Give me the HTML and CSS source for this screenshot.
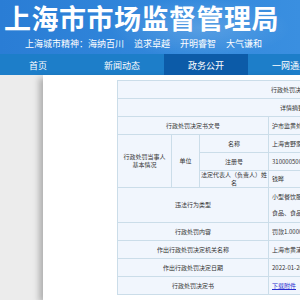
FILE: index.html
```html
<!DOCTYPE html>
<html lang="zh-CN">
<head>
<meta charset="UTF-8" />
<meta name="viewport" content="width=device-width, initial-scale=1" />
<title>上海市市场监督管理局 - 行政处罚信息</title>
<link rel="stylesheet" href="styles.css">
</head>
<body>
<div class="top">
  <div class="banner">
    <h1>上海市市场监督管理局</h1>
    <p class="motto">
      <span>上海城市精神：海纳百川</span>
      <span>追求卓越</span>
      <span>开明睿智</span>
      <span>大气谦和</span>
    </p>
  </div>
  <ul class="nav">
    <li>首页</li>
    <li>新闻动态</li>
    <li class="on">政务公开</li>
    <li>一网通办</li>
  </ul>
</div>

<div class="page">
  <div class="main">
    <!-- 行政处罚信息表 -->
    <table class="info">
      <colgroup>
        <col class="c1"><col class="c2"><col class="c3"><col class="c4">
      </colgroup>
      <tr><td colspan="4" class="mid">行政处罚决定书信息</td></tr>
      <tr><td colspan="4" class="mid">详情摘要信息</td></tr>
      <tr><td colspan="3" class="mid">行政处罚决定书文号</td><td>沪市监黄处〔2022〕012021000318号</td></tr>
      <tr>
        <td rowspan="3" class="mid">行政处罚当事人<br>基本情况</td>
        <td rowspan="3" class="mid">单位</td>
        <td class="mid">名称</td>
        <td>上海吉野家快餐有限公司第一分店</td>
      </tr>
      <tr><td class="mid">注册号</td><td>310000500123456</td></tr>
      <tr class="short"><td class="mid">法定代表人（负责人）姓名</td><td>钱晔</td></tr>
      <tr class="tall"><td colspan="3" class="mid">违法行为类型</td><td>小型餐饮服务提供者违法行为<br><br>食品、食品添加剂经营违法行为</td></tr>
      <tr><td colspan="3" class="mid">行政处罚内容</td><td>罚款1.000000万元</td></tr>
      <tr><td colspan="3" class="mid">作出行政处罚决定机关名称</td><td>上海市黄浦区市场监督管理局</td></tr>
      <tr><td colspan="3" class="mid">作出行政处罚决定日期</td><td>2022-01-20</td></tr>
      <tr><td colspan="3" class="mid">行政处罚决定书</td><td><a href="#">下载附件</a></td></tr>
    </table>
  </div>
</div>
</body>
</html>
```

FILE: styles.css
```css
html, body {
  margin: 0;
  padding: 0;
  overflow: hidden;
}
body {
  font-family: "Noto Sans CJK SC", "Noto Sans", sans-serif;
  background: #ececec;
  color: #333;
}
.banner {
  height: 54px;
  box-sizing: border-box;
  padding: 3px 0 0 4px;
  background:
    radial-gradient(ellipse 90px 30px at 200px 28px, rgb(255 255 255 / 0.18), transparent),
    linear-gradient(90deg, #2a7dd5, #3288dc 60%, #3a8fe0);
  color: white;
}
.banner h1 {
  margin: 0;
  font-size: 27px;
  line-height: 30px;
  letter-spacing: 0.5px;
  font-weight: bold;
}
.motto {
  margin: 6px 0 0 21px;
  font-size: 9px;
  line-height: 10px;
  display: flex;
  gap: 10px;
}
.nav {
  list-style: none;
  margin: 0;
  padding: 0 0 0 0;
  height: 21px;
  background: #1d7ec9;
  display: flex;
  overflow: hidden;
}
.nav li {
  flex: 0 0 84px;
  text-align: center;
  color: white;
  font-size: 9px;
  line-height: 23px;
}
.nav li:first-child {
  margin-left: -4px;
}
.nav li.on {
  background: #0c5ba8;
}
.page {
  min-height: 225px;
}
.main {
  margin-left: 43px;
  min-height: 225px;
  padding-top: 5px;
  background: white;
  box-shadow: -7px 0 6px -3px rgb(0 0 0 / 0.25);
}
.info {
  margin-left: 74px;
  width: 362px;
  table-layout: fixed;
  border-collapse: collapse;
  font-size: 6px;
  line-height: 8px;
}
.c1 { width: 54px; }
.c2 { width: 28px; }
.c3 { width: 69px; }
.info td {
  height: 17px;
  padding: 0 1px;
  background: #f1f6fd;
  border: 1px solid #cbdde9;
  white-space: nowrap;
}
.info td:last-child {
  padding-left: 3px;
}
.info td.mid {
  text-align: center;
  white-space: normal;
  padding: 0 1px;
}
.info tr.short td {
  height: 16px;
}
.info tr.tall td {
  height: 34px;
}
.info a {
  color: #2a2fd0;
}
```
